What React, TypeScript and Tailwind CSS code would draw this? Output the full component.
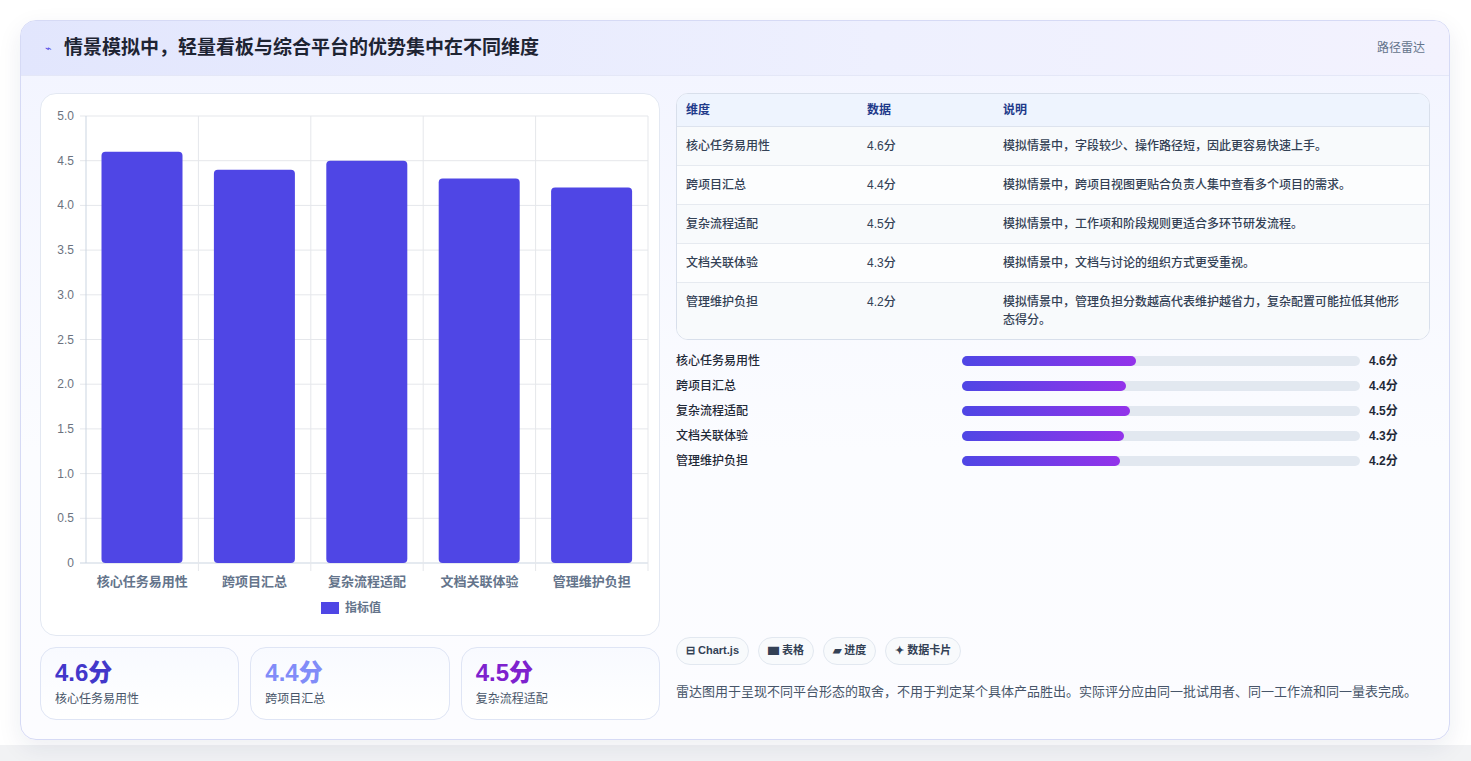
import React from "react";

const cats = ["核心任务易用性", "跨项目汇总", "复杂流程适配", "文档关联体验", "管理维护负担"];
const vals = [4.6, 4.4, 4.5, 4.3, 4.2];
const desc = [
  "模拟情景中，字段较少、操作路径短，因此更容易快速上手。",
  "模拟情景中，跨项目视图更贴合负责人集中查看多个项目的需求。",
  "模拟情景中，工作项和阶段规则更适合多环节研发流程。",
  "模拟情景中，文档与讨论的组织方式更受重视。",
  "模拟情景中，管理负担分数越高代表维护越省力，复杂配置可能拉低其他形态得分。",
];
const pct = [43.6, 41.3, 42.3, 40.6, 39.8];

function Chart() {
  const x0 = 45, x1 = 607, yT = 22, yB = 469;
  const cw = (x1 - x0) / 5;
  const ticks = [5, 4.5, 4, 3.5, 3, 2.5, 2, 1.5, 1, 0.5, 0];
  const y = (v: number) => yB - (v / 5) * (yB - yT);
  return (
    <svg width="619" height="541" className="block" style={{ fontFamily: "'Liberation Sans','Noto Sans CJK SC',sans-serif" }}>
      {ticks.map((t) => (
        <g key={t}>
          <line x1={x0 - 6} x2={x1} y1={y(t)} y2={y(t)} stroke={t === 0 ? "#cbd5e1" : "#e5e7eb"} />
          <text x={x0 - 12} y={y(t) + 4} textAnchor="end" fontSize="12" fill="#6b7280">{t.toFixed(t === 0 ? 0 : 1)}</text>
        </g>
      ))}
      {[0, 1, 2, 3, 4, 5].map((i) => (
        <line key={i} x1={x0 + i * cw} x2={x0 + i * cw} y1={yT} y2={yB + (i === 0 ? 0 : 8)} stroke={i === 0 ? "#cbd5e1" : "#e5e7eb"} />
      ))}
      {vals.map((v, i) => (
        <rect key={i} x={x0 + i * cw + 15.5} y={y(v)} width={81} height={yB - y(v)} rx={4} fill="#4f46e5" />
      ))}
      {cats.map((c, i) => (
        <text key={c} x={x0 + i * cw + cw / 2} y={492} textAnchor="middle" fontSize="13" fontWeight="600" fill="#64748b">{c}</text>
      ))}
      <rect x={280} y={508} width={18} height={12} fill="#4f46e5" />
      <text x={304} y={518} fontSize="12" fontWeight="600" fill="#64748b">指标值</text>
    </svg>
  );
}

export default function App() {
  return (
    <div className="min-h-[761px] bg-[linear-gradient(to_bottom,#ffffff_0,#ffffff_745px,#f1f2f4_745px)] p-5 pr-[21px]" style={{ fontFamily: "'Liberation Sans','Noto Sans CJK SC',sans-serif" }}>
      <div className="h-[720px] rounded-2xl border border-[#d6daf5] shadow-[0_8px_24px_rgba(30,41,90,0.08)] overflow-hidden bg-[linear-gradient(to_bottom,#f2f4ff,#fbfcff_60%,#fcfcff)] flex flex-col">
        <div className="h-[55px] flex items-center justify-between px-6 bg-[linear-gradient(to_right,#e2e6fd,#eef0fe_60%,#f3f2fe)] border-b border-[#e4e7f7]">
          <div className="flex items-center gap-3">
            <span className="text-[11px] text-[#4f46e5]">⌁</span>
            <h1 className="text-[19px] font-bold text-[#1e2433]">情景模拟中，轻量看板与综合平台的优势集中在不同维度</h1>
          </div>
          <span className="text-[12px] text-[#64748b]">路径雷达</span>
        </div>
        <div className="flex gap-4 px-[19px] pt-[17px]">
          <div className="w-[620px] flex flex-col gap-[11px]">
            <div className="h-[543px] bg-white rounded-2xl border border-[#e3e8f2]">
              <Chart />
            </div>
            <div className="grid grid-cols-3 gap-[11px]">
              {[
                ["4.6分", "核心任务易用性", "text-[#4338ca]"],
                ["4.4分", "跨项目汇总", "text-[#818cf8]"],
                ["4.5分", "复杂流程适配", "text-[#7e22ce]"],
              ].map(([v, l, c]) => (
                <div key={l} className="h-[73px] rounded-2xl border border-[#dfe5f5] bg-[linear-gradient(to_bottom,#f8faff,#ffffff)] px-[14px] pt-[10px]">
                  <div className={`text-[24px] font-extrabold leading-[30px] ${c}`}>{v}</div>
                  <div className="text-[12px] text-[#475569] mt-[2px]">{l}</div>
                </div>
              ))}
            </div>
          </div>
          <div className="flex-1 flex flex-col">
            <div className="rounded-xl border border-[#d8dfeb] overflow-hidden bg-white">
              <div className="flex h-[33px] items-center bg-[#eef4fe] border-b border-[#dde3ee] text-[12px] font-bold text-[#1e3a8a] px-[9px]">
                <div className="w-[181px]">维度</div>
                <div className="w-[136px]">数据</div>
                <div className="flex-1">说明</div>
              </div>
              {cats.map((c, i) => (
                <div key={c} className={`flex px-[9px] py-[10px] text-[12px] font-medium text-[#334155] leading-[18px] ${i < 4 ? "border-b border-[#e6eaf0]" : ""} ${i % 2 === 0 ? "bg-[#f8fafc]" : "bg-[#fcfdfe]"}`}>
                  <div className="w-[181px]">{c}</div>
                  <div className="w-[136px]">{vals[i]}分</div>
                  <div className="flex-1 pr-4">{desc[i]}</div>
                </div>
              ))}
            </div>
            <div className="flex flex-col gap-[7px] mt-[12px]">
              {cats.map((c, i) => (
                <div key={c} className="flex items-center h-[18px] text-[12px]">
                  <div className="w-[286px] font-medium text-[#1f2937]">{c}</div>
                  <div className="w-[398px] h-[10px] rounded-full bg-[#e2e8f0]">
                    <div className="h-full rounded-full bg-[linear-gradient(to_right,#4f46e5,#9333ea)]" style={{ width: `${pct[i]}%` }} />
                  </div>
                  <div className="ml-[9px] font-bold text-[#1f2937]">{vals[i]}分</div>
                </div>
              ))}
            </div>
            <div className="mt-auto flex gap-[9px] mb-[17px]">
              {["⊟ Chart.js", "▆ 表格", "▰ 进度", "✦ 数据卡片"].map((t) => (
                <span key={t} className="h-[28px] px-[9px] flex items-center rounded-full border border-[#e2e8f0] bg-[#f8fafc] text-[11px] font-bold text-[#334155]">{t}</span>
              ))}
            </div>
            <p className="text-[13px] text-[#475569] mb-[19px]">雷达图用于呈现不同平台形态的取舍，不用于判定某个具体产品胜出。实际评分应由同一批试用者、同一工作流和同一量表完成。</p>
          </div>
        </div>
      </div>
    </div>
  );
}
